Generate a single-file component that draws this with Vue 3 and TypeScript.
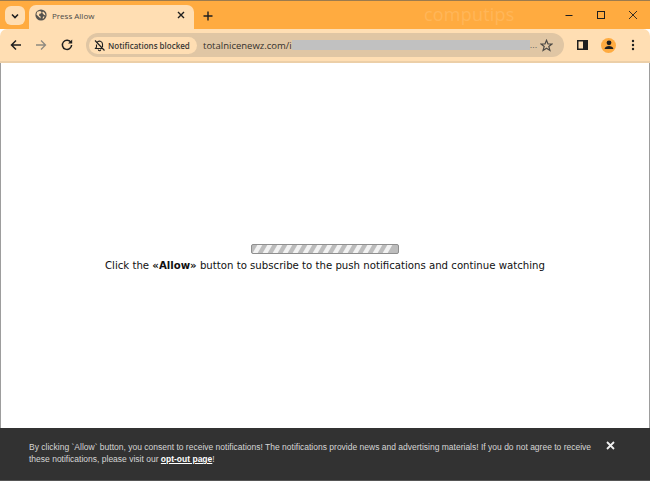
<script setup lang="ts">
const ticks = Array.from({ length: 14 }, (_, i) => i)
</script>

<template>
  <div class="window">
    <header class="tabstrip">
      <button class="tabsearch" aria-label="Search tabs">
        <svg width="10" height="10" viewBox="0 0 10 10"><path d="M2 3.500 5 6.500 8 3.500" fill="none" stroke="#1f1f1f" stroke-width="1.600" /></svg>
      </button>
      <div class="tab">
        <svg class="globe" width="12" height="12" viewBox="0 0 12 12">
          <circle cx="6" cy="6" r="5.600" fill="#55534f" />
          <path d="M2.200 2.800 5 2l1.600 1-.6 1.400-1.600.4-.4 1.600 1.600 1v2L4 8 1.400 5.400ZM8 2.400l1.800 1.600.8 2.400-1.400-.4-1.200-1.200-.8-1Z M8 7.400l1.600.2-.8 1.600-1.200.6Z" fill="#ffdeb3" />
        </svg>
        <span class="tab-title">Press Allow</span>
        <svg class="tab-x" width="8" height="8" viewBox="0 0 8 8"><path d="M1 1 7 7M7 1 1 7" stroke="#1f1f1f" stroke-width="1.400" /></svg>
      </div>
      <svg class="newtab" width="10" height="10" viewBox="0 0 10 10"><path d="M5 .5v9M.5 5h9" stroke="#1f1f1f" stroke-width="1.400" /></svg>
      <div class="mark">computips</div>
      <div class="winctl">
        <svg width="10" height="10" viewBox="0 0 10 10"><path d="M1.500 5.500h7" stroke="#1f1f1f" stroke-width="1" /></svg>
        <svg width="10" height="10" viewBox="0 0 10 10"><rect x="1.500" y="1.500" width="7" height="7" fill="none" stroke="#1f1f1f" stroke-width="1" /></svg>
        <svg width="10" height="10" viewBox="0 0 10 10"><path d="M1 1l8 8M9 1 1 9" stroke="#1f1f1f" stroke-width=".9" /></svg>
      </div>
    </header>

    <nav class="toolbar">
      <svg class="ic" width="12" height="12" viewBox="0 0 12 12"><path d="M11 6H2M6 1.500 1.500 6 6 10.500" fill="none" stroke="#1f1f1f" stroke-width="1.500" /></svg>
      <svg class="ic fwd" width="12" height="12" viewBox="0 0 12 12"><path d="M1 6h9M6 1.500 10.500 6 6 10.500" fill="none" stroke="#8f8a80" stroke-width="1.300" /></svg>
      <svg class="ic reload" width="12" height="12" viewBox="0 0 12 12"><path d="M10 3.600A4.600 4.600 0 1 0 10.600 6" fill="none" stroke="#1f1f1f" stroke-width="1.500" /><path d="M7 4.500h4.200V.4Z" fill="#1f1f1f" /></svg>
      <div class="omnibox">
        <div class="chip">
          <svg width="13" height="13" viewBox="0 0 13 13">
            <path d="M4 3.500a3 3 0 0 1 5.500 1.500v3M3.500 5.500V8l-1 1.500h7M5.300 10.500a1.200 1.200 0 0 0 2.400 0" fill="none" stroke="#1f1f1f" stroke-width="1.100" />
            <path d="M2 1.500l9.500 10" stroke="#1f1f1f" stroke-width="1.100" />
          </svg>
          <span>Notifications blocked</span>
        </div>
        <span class="url">totalnicenewz.com/i</span>
        <div class="blur"></div>
        <span class="dots">...</span>
        <svg class="star" width="13" height="13" viewBox="0 0 13 13"><path d="M6.500 1.300 8 5h3.900L8.800 7.500l1.100 3.900-3.400-2.200-3.400 2.200 1.100-3.900L1.100 5H5Z" fill="none" stroke="#4d4a45" stroke-width="1.200" /></svg>
      </div>
      <svg class="side" width="12" height="12" viewBox="0 0 12 12"><rect x=".75" y="1.750" width="9.500" height="8.500" fill="none" stroke="#1f1f1f" stroke-width="1.500" /><rect x="6" y="2" width="4" height="8" fill="#1f1f1f" /></svg>
      <div class="avatar">
        <svg width="14" height="14" viewBox="0 0 14 14"><circle cx="7" cy="4.800" r="2.400" fill="#1f1f1f" /><path d="M2.600 11c0-2 2.400-3 4.400-3s4.400 1 4.400 3Z" fill="#1f1f1f" /></svg>
      </div>
      <svg class="menu" width="4" height="12" viewBox="0 0 4 12"><circle cx="2" cy="2" r="1.200" fill="#1f1f1f" /><circle cx="2" cy="6" r="1.200" fill="#1f1f1f" /><circle cx="2" cy="10" r="1.200" fill="#1f1f1f" /></svg>
    </nav>

    <main class="page">
      <div class="progress">
        <i v-for="t in ticks" :key="t"></i>
      </div>
      <p class="msg">Click the <b>«Allow»</b> button to subscribe to the push notifications and continue watching</p>
    </main>

    <footer class="consent">
      <p>By clicking `Allow` button, you consent to receive notifications! The notifications provide news and advertising materials! If you do not agree to receive these notifications, please visit our <a>opt-out page</a>!</p>
      <svg class="close" width="9" height="9" viewBox="0 0 9 9"><path d="M1 1l7 7M8 1 1 8" stroke="#f0f0f0" stroke-width="1.800" /></svg>
    </footer>
  </div>
</template>

<style>
html, body { margin: 0; background: #fff; }
</style>

<style scoped>
.window {
  width: 650px;
  height: 481px;
  display: flex;
  flex-direction: column;
  overflow: hidden;
  font-family: "Liberation Sans", Arial, sans-serif;
  color: #1f1f1f;
}
.tabstrip {
  height: 29px;
  flex: none;
  box-sizing: border-box;
  background: #ffab40;
  border-top: 1px solid #9c7b4e;
  display: flex;
  align-items: flex-end;
  padding-left: 5px;
}
.tabsearch {
  width: 20px;
  height: 19px;
  margin-bottom: 4px;
  padding: 0;
  border: 0;
  border-radius: 6px;
  background: #ffdeb3;
  display: flex;
  align-items: center;
  justify-content: center;
}
.tab {
  width: 165px;
  height: 24px;
  margin-left: 4px;
  background: #ffdeb3;
  border-radius: 7px 7px 0 0;
  display: flex;
  align-items: center;
  padding: 0 0 4px 6px;
  box-sizing: border-box;
  position: relative;
}
.globe { flex: none; }
.tab-title {
  margin-left: 5px;
  font-family: "Open Sans", sans-serif;
  font-size: 8px;
  color: #4a4a48;
  flex: 1;
}
.tab-x { margin-right: 9px; }
.newtab { margin: 0 0 8px 9px; }
.mark {
  position: absolute;
  left: 424px;
  top: 2px;
  font-family: "Open Sans", sans-serif;
  font-size: 18px;
  letter-spacing: 0.2px;
  color: #ffb658;
}
.winctl {
  margin-left: auto;
  display: flex;
  gap: 22px;
  padding-right: 12px;
  margin-bottom: 9px;
}
.toolbar {
  height: 34px;
  flex: none;
  box-sizing: border-box;
  background: #ffdeb3;
  border-bottom: 2px solid #eccfa8;
  border-radius: 7px 7px 0 0;
  display: flex;
  align-items: center;
  padding-left: 10px;
}
.ic { flex: none; }
.fwd { margin-left: 13px; }
.reload { margin-left: 14px; }
.omnibox {
  margin-left: 13px;
  width: 478px;
  height: 24px;
  flex: none;
  background: #e0c6a4;
  border-radius: 12px;
  display: flex;
  align-items: center;
  box-sizing: border-box;
  padding-left: 3px;
  position: relative;
}
.chip {
  height: 17px;
  width: 108px;
  box-sizing: border-box;
  background: #ffdeb3;
  border-radius: 9px;
  display: flex;
  align-items: center;
  padding-left: 4px;
  gap: 2px;
  font-family: "Open Sans", sans-serif;
  font-size: 8px;
  font-weight: 600;
  white-space: nowrap;
  color: #3a3834;
}
.url {
  margin-left: 6px;
  font-family: "Open Sans", sans-serif;
  font-size: 9.500px;
  color: #33312d;
}
.blur {
  width: 238px;
  height: 10px;
  background: #c1c1c1;
}
.dots {
  font-size: 9px;
  color: #6b675f;
  line-height: 14px;
}
.star { margin-left: 3px; }
.side { margin-left: 13px; flex: none; }
.avatar {
  margin-left: 12px;
  width: 15px;
  height: 15px;
  border-radius: 50%;
  background: #ffab40;
  display: flex;
  align-items: center;
  justify-content: center;
  flex: none;
}
.menu { margin-left: 15px; flex: none; }
.page {
  flex: 1;
  box-sizing: border-box;
  border-left: 1px solid #9d9d9d;
  border-right: 1px solid #9d9d9d;
  background: #fff;
  display: flex;
  flex-direction: column;
  align-items: center;
  padding-top: 181px;
}
.progress {
  width: 148px;
  height: 10px;
  box-sizing: border-box;
  border: 1px solid #8f8f8f;
  border-radius: 2px;
  background: #bdbdbd;
  display: flex;
  gap: 5px;
  padding-left: 3px;
  overflow: hidden;
}
.progress i {
  width: 5px;
  flex: none;
  background: #f2f2f2;
  transform: skewX(-30deg);
}
.msg {
  margin: 4px 0 0;
  font-family: "DejaVu Sans Condensed", "DejaVu Sans", sans-serif;
  font-size: 11.300px;
  line-height: 16px;
  color: #111;
  white-space: nowrap;
}
.msg b { font-weight: 700; }
.consent {
  height: 53px;
  flex: none;
  box-sizing: border-box;
  background: #323232;
  display: flex;
  align-items: flex-start;
  padding: 13px 0 0 29px;
  position: relative;
  border-bottom: 1px solid #555;
}
.consent p {
  margin: 0;
  width: 570px;
  font-size: 8.500px;
  line-height: 12px;
  color: #d6d6d6;
}
.consent a { color: #fff; font-weight: 700; text-decoration: underline; }
.close { margin: 0 0 0 7px; }
</style>
